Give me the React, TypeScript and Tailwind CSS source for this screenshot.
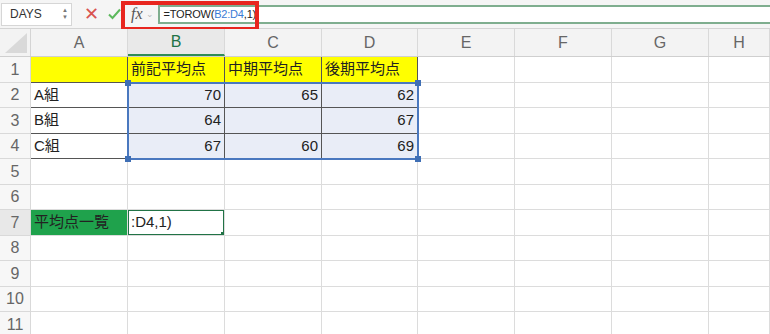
import { Fragment } from 'react'

type Cell = {
  text?: string
  align?: 'left' | 'right'
  tone?: 'yellow' | 'green' | 'sel' | 'active'
}

const cols = ['A', 'B', 'C', 'D', 'E', 'F', 'G', 'H']
const colW = ['w-[97px]', 'w-[97px]', 'w-[97px]', 'w-[96px]', 'w-[97px]', 'w-[97px]', 'w-[97px]', 'flex-1']
const rowH = ['h-[26px]', 'h-[25px]', 'h-[26px]', 'h-[25px]', 'h-[26px]', 'h-[25px]', 'h-[26px]', 'h-[25px]', 'h-[26px]', 'h-[25px]', 'h-[26px]']

const data: Record<string, Cell> = {
  A1: { tone: 'yellow' },
  B1: { text: '前記平均点', tone: 'yellow' },
  C1: { text: '中期平均点', tone: 'yellow' },
  D1: { text: '後期平均点', tone: 'yellow' },
  A2: { text: 'A組' },
  A3: { text: 'B組' },
  A4: { text: 'C組' },
  B2: { text: '70', align: 'right', tone: 'sel' },
  C2: { text: '65', align: 'right', tone: 'sel' },
  D2: { text: '62', align: 'right', tone: 'sel' },
  B3: { text: '64', align: 'right', tone: 'sel' },
  C3: { tone: 'sel' },
  D3: { text: '67', align: 'right', tone: 'sel' },
  B4: { text: '67', align: 'right', tone: 'sel' },
  C4: { text: '60', align: 'right', tone: 'sel' },
  D4: { text: '69', align: 'right', tone: 'sel' },
  A7: { text: '平均点一覧', tone: 'green' },
  B7: { text: ':D4,1)', tone: 'active' },
}

function tableBorder(col: number, row: number) {
  // A1:D4 carries dark borders
  if (col <= 3 && row <= 4) return 'border-r border-b border-[#555]'
  return 'border-r border-b border-[#dcdcdc]'
}

function Handle({ className }: { className: string }) {
  return <span className={`absolute h-[6px] w-[6px] bg-[#3f6fb5] ${className}`} />
}

export default function App() {
  return (
    <div className="h-[334px] w-[770px] overflow-hidden bg-white font-['Liberation_Sans','Noto_Sans_CJK_JP',sans-serif] text-[15px] text-[#222]">
      {/* formula bar */}
      <div className="flex h-[29px] items-center border-b border-[#d4d4d4] bg-[#f5f5f5]">
        <div className="ml-[1px] flex h-[23px] w-[71px] items-center justify-between border border-[#d6d6d6] bg-white pl-[8px] pr-[3px] text-[12px] text-[#333]">
          <span>DAYS</span>
          <span className="flex flex-col text-[6px] leading-[7px] text-[#777]">
            <span>▲</span>
            <span>▼</span>
          </span>
        </div>
        <span className="ml-[12px] text-[18px] leading-none text-[#d9534f]">✕</span>
        <svg className="ml-[9px]" width="13" height="12" viewBox="0 0 13 12">
          <path d="M1 6.5 L4.5 10 L12 1.5" fill="none" stroke="#5cb85c" strokeWidth="2" />
        </svg>
        <div className="relative ml-[2px] flex h-full flex-1 items-center">
          <span className="ml-[8px] font-['Liberation_Serif',serif] text-[16px] italic text-[#555]">fx</span>
          <span className="ml-[3px] mt-[2px] text-[9px] text-[#bbb]">⌄</span>
          <div className="ml-[4px] flex h-[19px] flex-1 items-center border-y-2 border-l-2 border-[#7fae8f] bg-white pl-[4px] text-[11px] tracking-[-0.2px] text-[#222]">
            =TOROW(<span className="text-[#3a7bd5]">B2:D4</span>,1)
          </div>
          <div className="pointer-events-none absolute left-[-2px] top-[1px] h-[30px] w-[138px] border-4 border-[#e8261f]" />
        </div>
      </div>

      {/* sheet */}
      <div className="relative">
        <div className="flex h-[28px] border-b border-[#cfcfcf] bg-[#f3f3f3]">
          <div className="relative w-[31px] border-r border-[#d4d4d4]">
            <svg className="absolute bottom-[3px] right-[3px]" width="22" height="20" viewBox="0 0 22 20">
              <path d="M22 0 L22 20 L0 20 Z" fill="#d9d9d9" />
            </svg>
          </div>
          {cols.map((c, i) => (
            <div
              key={c}
              className={`${colW[i]} flex items-center justify-center border-r border-[#d9d9d9] font-['Liberation_Sans',sans-serif] text-[16px] ${
                c === 'B' ? 'border-b-2 border-b-[#2e8b57] bg-[#e9e9e9] text-[#217346]' : 'text-[#666]'
              }`}
            >
              {c}
            </div>
          ))}
        </div>

        {rowH.map((h, ri) => {
          const row = ri + 1
          return (
            <div key={row} className={`flex ${h}`}>
              <div
                className={`flex w-[31px] items-center justify-center border-r border-b border-[#d9d9d9] text-[16px] text-[#666] ${
                  row === 7 ? 'bg-[#e8e8e8]' : 'bg-[#f7f7f7]'
                }`}
              >
                {row}
              </div>
              {cols.map((c, ci) => {
                const cell = data[`${c}${row}`] ?? {}
                const tone =
                  cell.tone === 'yellow'
                    ? 'bg-[#ffff00]'
                    : cell.tone === 'green'
                      ? 'bg-[#1fa24c]'
                      : cell.tone === 'sel'
                        ? 'bg-[#e9edf7]'
                        : 'bg-white'
                return (
                  <Fragment key={c}>
                    <div
                      className={`relative ${colW[ci]} flex items-center overflow-hidden whitespace-nowrap px-[3px] ${tone} ${tableBorder(ci, row)} ${
                        cell.align === 'right' ? 'justify-end' : 'justify-start'
                      }`}
                    >
                      {cell.text}
                      {cell.tone === 'active' && (
                        <>
                          <span className="absolute inset-[-1px] border-2 border-[#217346]" />
                          <span className="absolute bottom-[-2px] right-[-2px] h-[5px] w-[5px] bg-[#217346]" />
                        </>
                      )}
                    </div>
                  </Fragment>
                )
              })}
            </div>
          )
        })}

        {/* selection range B2:D4 */}
        <div className="pointer-events-none absolute left-[127px] top-[53px] h-[78px] w-[292px] border-2 border-[#4a78bf]">
          <Handle className="left-[-4px] top-[-4px]" />
          <Handle className="right-[-4px] top-[-4px]" />
          <Handle className="bottom-[-4px] left-[-4px]" />
          <Handle className="bottom-[-4px] right-[-4px]" />
        </div>
      </div>
    </div>
  )
}
